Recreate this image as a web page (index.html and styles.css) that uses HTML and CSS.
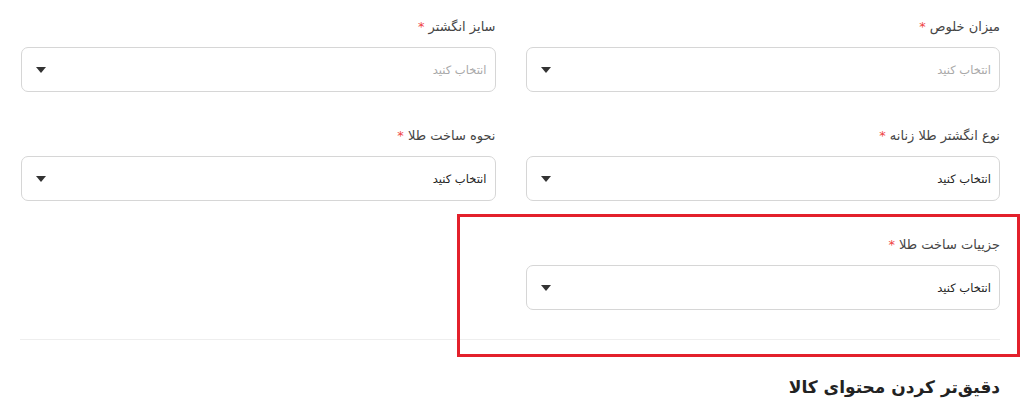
FILE: index.html
```html
<!DOCTYPE html>
<html lang="fa" dir="rtl">
  <head>
    <meta charset="UTF-8" />
    <meta name="viewport" content="width=device-width, initial-scale=1.0" />
    <title>ویژگی‌های کالا</title>
    <link rel="stylesheet" href="styles.css">
  </head>

  <body>
    <main class="attrs">
      <section class="attrs-grid">
        <div class="field">
          <label class="field-label">میزان خلوص <span class="req">*</span></label>
          <div class="select is-empty">
            <span class="select-text">انتخاب کنید</span>
            <svg class="caret" width="10" height="6" viewBox="0 0 10 6"><path d="M0 0h10L5 6z" fill="#333"/></svg>
          </div>
        </div>
        <div class="field">
          <label class="field-label">سایز انگشتر <span class="req">*</span></label>
          <div class="select is-empty">
            <span class="select-text">انتخاب کنید</span>
            <svg class="caret" width="10" height="6" viewBox="0 0 10 6"><path d="M0 0h10L5 6z" fill="#333"/></svg>
          </div>
        </div>
        <div class="field">
          <label class="field-label">نوع انگشتر طلا زنانه <span class="req">*</span></label>
          <div class="select">
            <span class="select-text">انتخاب کنید</span>
            <svg class="caret" width="10" height="6" viewBox="0 0 10 6"><path d="M0 0h10L5 6z" fill="#333"/></svg>
          </div>
        </div>
        <div class="field">
          <label class="field-label">نحوه ساخت طلا <span class="req">*</span></label>
          <div class="select">
            <span class="select-text">انتخاب کنید</span>
            <svg class="caret" width="10" height="6" viewBox="0 0 10 6"><path d="M0 0h10L5 6z" fill="#333"/></svg>
          </div>
        </div>
        <div class="field">
          <label class="field-label">جزییات ساخت طلا <span class="req">*</span></label>
          <div class="select">
            <span class="select-text">انتخاب کنید</span>
            <svg class="caret" width="10" height="6" viewBox="0 0 10 6"><path d="M0 0h10L5 6z" fill="#333"/></svg>
          </div>
        </div>
      </section>
      <hr class="divider" />
      <h3 class="section-title">دقیق‌تر کردن محتوای کالا</h3>
      <!-- highlight box drawn on top of the last field -->
      <div class="highlight"></div>
    </main>
  </body>
</html>
```

FILE: styles.css
```css
* {
  box-sizing: border-box;
}
body {
  margin: 0;
  background: #fff;
  font-family: "DejaVu Sans", "Noto Sans", sans-serif;
  color: #333;
}
.attrs {
  position: relative;
  padding: 17px 24px 0 20px;
  height: 420px;
  overflow: hidden;
}
.attrs-grid {
  display: grid;
  grid-template-columns: 1fr 1fr;
  column-gap: 30px;
  row-gap: 34px;
  padding-left: 1px;
}

.field-label {
  display: block;
  height: 20px;
  line-height: 20px;
  margin-bottom: 10px;
  font-size: 13px;
  color: #444;
}
.req {
  color: #ef4444;
}

.select {
  display: flex;
  align-items: center;
  justify-content: space-between;
  height: 45px;
  padding: 0 8px 0 14px;
  border: 1px solid #d6d6d6;
  border-radius: 7px;
  font-size: 11.5px;
  color: #222;
}
.select.is-empty {
  color: #a8a8a8;
}
.caret {
  width: 10px;
  height: 6px;
}

.divider {
  margin: 29px 0 0;
  border: 0;
  border-top: 1px solid #eee;
}
.section-title {
  margin: 34px 0 0;
  font-size: 17px;
  line-height: 26px;
  font-weight: bold;
  color: #222;
}

.highlight {
  position: absolute;
  top: 214px;
  left: 457px;
  width: 563px;
  height: 143px;
  border: 3px solid #e3202b;
}
```
